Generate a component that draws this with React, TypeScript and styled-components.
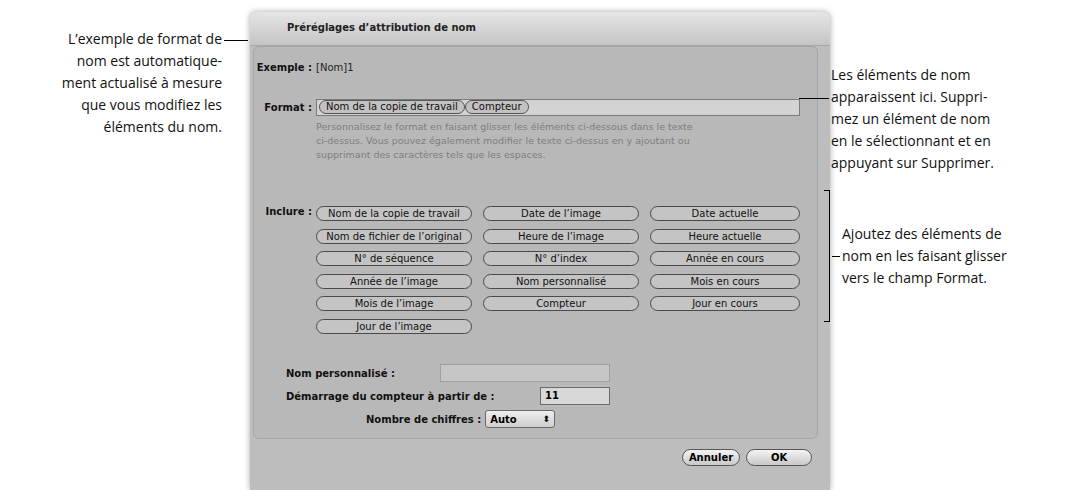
import React from 'react'
import styled, { createGlobalStyle } from 'styled-components'

const Global = createGlobalStyle`
  html, body { margin: 0; padding: 0; background: #fff; }
  body { width: 1068px; height: 490px; overflow: hidden; }
`

const include = [
  ['Nom de la copie de travail', 'Date de l’image', 'Date actuelle'],
  ['Nom de fichier de l’original', 'Heure de l’image', 'Heure actuelle'],
  ['N° de séquence', 'N° d’index', 'Année en cours'],
  ['Année de l’image', 'Nom personnalisé', 'Mois en cours'],
  ['Mois de l’image', 'Compteur', 'Jour en cours'],
  ['Jour de l’image']
]

export default function App() {
  return (
    <S.Page>
      <Global />
      <S.LeftNote>
        <S.NoteText $align="right">
          L’exemple de format de
          <br />
          nom est automatique-
          <br />
          ment actualisé à mesure
          <br />
          que vous modifiez les
          <br />
          éléments du nom.
        </S.NoteText>
        <S.Leader $w={24} $top={12} />
      </S.LeftNote>

      <S.Dialog>
        <S.TitleBar>Préréglages d’attribution de nom</S.TitleBar>
        <S.Panel>
          <S.Row $gap={0}>
            <S.Label $w={58}>Exemple :</S.Label>
            <S.Value>[Nom]1</S.Value>
          </S.Row>
          <S.Row $gap={22}>
            <S.Label $w={58}>Format :</S.Label>
            <S.FormatField>
              <S.Token>Nom de la copie de travail</S.Token>
              <S.Token>Compteur</S.Token>
            </S.FormatField>
          </S.Row>
          <S.Help>
            Personnalisez le format en faisant glisser les éléments ci-dessous dans le texte
            <br />
            ci-dessus. Vous pouvez également modifier le texte ci-dessus en y ajoutant ou
            <br />
            supprimant des caractères tels que les espaces.
          </S.Help>
          <S.IncludeBlock>
            <S.Label $w={58}>Inclure :</S.Label>
            <S.PillGrid>
              {include.flat().map(t => (
                <S.Pill key={t}>{t}</S.Pill>
              ))}
            </S.PillGrid>
          </S.IncludeBlock>
          <S.Fields>
            <S.FieldRow>
              <S.Label $w={0}>Nom personnalisé :</S.Label>
              <S.Input $w={170} $disabled />
            </S.FieldRow>
            <S.FieldRow>
              <S.Label $w={0}>Démarrage du compteur à partir de :</S.Label>
              <S.Input $w={70}>11</S.Input>
            </S.FieldRow>
            <S.FieldRow $right>
              <S.Label $w={0}>Nombre de chiffres :</S.Label>
              <S.Select>
                Auto<S.Arrows>⬍</S.Arrows>
              </S.Select>
            </S.FieldRow>
          </S.Fields>
        </S.Panel>
        <S.Buttons>
          <S.Button $w={58}>Annuler</S.Button>
          <S.Button $w={66}>OK</S.Button>
        </S.Buttons>
      </S.Dialog>

      <S.RightNotes>
        <S.RightTop>
          <S.Leader $w={30} $top={34} />
          <S.NoteText $align="left">
            Les éléments de nom
            <br />
            apparaissent ici. Suppri-
            <br />
            mez un élément de nom
            <br />
            en le sélectionnant et en
            <br />
            appuyant sur Supprimer.
          </S.NoteText>
        </S.RightTop>
        <S.RightBottom>
          <S.Bracket />
          <S.Leader $w={8} $top={0} />
          <S.NoteText $align="left">
            Ajoutez des éléments de
            <br />
            nom en les faisant glisser
            <br />
            vers le champ Format.
          </S.NoteText>
        </S.RightBottom>
      </S.RightNotes>
    </S.Page>
  )
}

const dialogFont = `font-family: "DejaVu Sans", "Liberation Sans", sans-serif;`

export const S = {
  Page: styled.div`
    display: grid;
    grid-template-columns: 250px 580px 1fr;
    height: 490px;
  `,
  LeftNote: styled.div`
    display: flex;
    align-items: flex-start;
    justify-content: flex-end;
    padding-top: 28px;
  `,
  NoteText: styled.div<{ $align: string }>`
    font-family: "Open Sans", "Liberation Sans", sans-serif;
    font-size: 14px;
    line-height: 22px;
    color: #111;
    text-align: ${p => p.$align};
    white-space: nowrap;
  `,
  Leader: styled.div<{ $w: number; $top: number }>`
    width: ${p => p.$w}px;
    height: 1px;
    background: #000;
    margin: ${p => p.$top}px 2px 0;
    flex-shrink: 0;
  `,
  Dialog: styled.div`
    margin-top: 12px;
    background: #bdbdbd;
    border-radius: 6px 6px 0 0;
    box-shadow: 0 0 6px rgba(0, 0, 0, 0.35);
    display: flex;
    flex-direction: column;
    ${dialogFont}
  `,
  TitleBar: styled.div`
    height: 34px;
    padding-left: 37px;
    padding-top: 10px;
    box-sizing: border-box;
    font-size: 10px;
    font-weight: bold;
    color: #222;
    background: linear-gradient(#e6e6e6, #c4c4c4);
    border-radius: 6px 6px 0 0;
    border-bottom: 1px solid #a8a8a8;
  `,
  Panel: styled.div`
    margin: 0 12px 0 3px;
    height: 393px;
    box-sizing: border-box;
    background: #b8b8b8;
    border: 1px solid #a6a6a6;
    border-radius: 6px;
    padding: 11px 0 0 0;
  `,
  Row: styled.div<{ $gap: number }>`
    display: flex;
    align-items: center;
    height: 18px;
    margin-top: ${p => p.$gap}px;
  `,
  Label: styled.div<{ $w: number }>`
    ${p => (p.$w ? `width: ${p.$w}px;` : '')}
    text-align: right;
    font-size: 10px;
    font-weight: bold;
    color: #111;
    margin-right: 4px;
    white-space: nowrap;
  `,
  Value: styled.div`
    font-size: 10px;
    color: #222;
  `,
  FormatField: styled.div`
    width: 484px;
    height: 17px;
    box-sizing: border-box;
    background: #d3d3d3;
    border: 1px solid #7a7a7a;
    display: flex;
    align-items: center;
    padding-left: 2px;
  `,
  Token: styled.div`
    font-size: 10px;
    color: #111;
    border: 1px solid #555;
    border-radius: 7px;
    background: #c2c2c2;
    padding: 0 6px;
    line-height: 12px;
  `,
  Help: styled.div`
    margin: 4px 0 0 62px;
    font-size: 9.5px;
    line-height: 14px;
    color: #7e7e7e;
  `,
  IncludeBlock: styled.div`
    display: flex;
    align-items: flex-start;
    margin-top: 44px;
  `,
  PillGrid: styled.div`
    display: grid;
    grid-template-columns: 156px 156px 150px;
    column-gap: 11px;
    row-gap: 7.5px;
  `,
  Pill: styled.div`
    height: 15px;
    box-sizing: border-box;
    border: 1px solid #4a4a4a;
    border-radius: 8px;
    background: #c4c4c4;
    font-size: 10px;
    line-height: 13px;
    text-align: center;
    color: #111;
    white-space: nowrap;
  `,
  Fields: styled.div`
    margin: 30px 0 0 32px;
    display: flex;
    flex-direction: column;
    gap: 4px;
    width: 324px;
  `,
  FieldRow: styled.div<{ $right?: boolean }>`
    display: flex;
    align-items: center;
    height: 19px;
    ${p => (p.$right ? 'padding-left: 80px;' : '')}
  `,
  Input: styled.div<{ $w: number; $disabled?: boolean }>`
    width: ${p => p.$w}px;
    height: 18px;
    box-sizing: border-box;
    border: 1px solid ${p => (p.$disabled ? '#a0a0a0' : '#6a6a6a')};
    background: ${p => (p.$disabled ? '#c6c6c6' : '#d8d8d8')};
    margin-left: auto;
    font-size: 10px;
    font-weight: bold;
    padding: 2px 4px;
  `,
  Select: styled.div`
    width: 70px;
    height: 18px;
    box-sizing: border-box;
    border: 1px solid #6a6a6a;
    border-radius: 3px;
    background: linear-gradient(#eee, #cfcfcf);
    font-size: 10px;
    font-weight: bold;
    padding: 2px 4px;
    display: flex;
    justify-content: space-between;
    align-items: center;
  `,
  Arrows: styled.span`
    font-size: 9px;
    font-weight: normal;
  `,
  Buttons: styled.div`
    display: flex;
    justify-content: flex-end;
    gap: 6px;
    padding: 10px 18px 0 0;
  `,
  Button: styled.div<{ $w: number }>`
    width: ${p => p.$w}px;
    height: 17px;
    box-sizing: border-box;
    border: 1px solid #555;
    border-radius: 9px;
    background: linear-gradient(#f4f4f4, #c8c8c8);
    font-size: 10px;
    font-weight: bold;
    text-align: center;
    line-height: 15px;
  `,
  RightNotes: styled.div`
    display: flex;
    flex-direction: column;
  `,
  RightTop: styled.div`
    display: flex;
    align-items: flex-start;
    padding-top: 64px;
    margin-left: -33px;
  `,
  RightBottom: styled.div`
    display: flex;
    align-items: center;
    margin-top: 16px;
    margin-left: -6px;
    height: 132px;
  `,
  Bracket: styled.div`
    width: 6px;
    height: 132px;
    border: 1px solid #000;
    border-left: none;
    box-sizing: border-box;
    flex-shrink: 0;
  `
}
